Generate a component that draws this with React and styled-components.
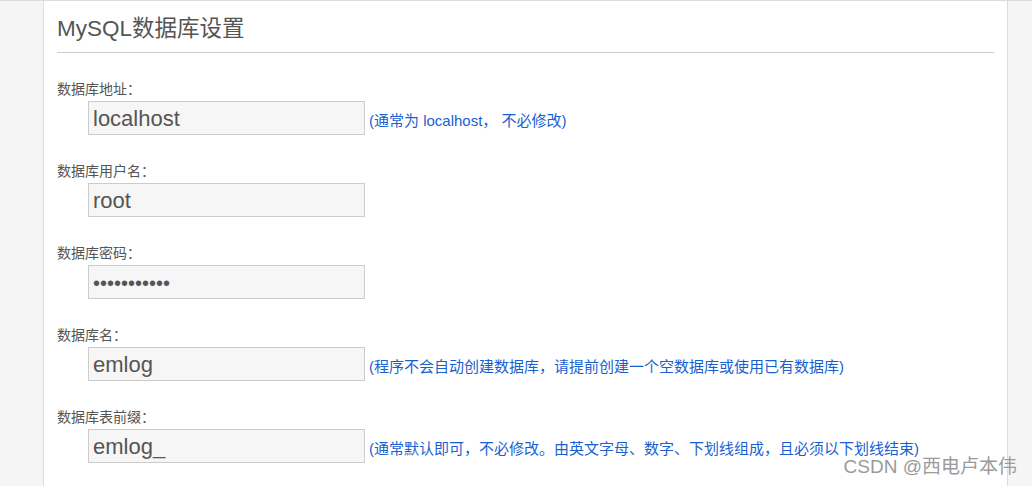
import React from "react";
import styled, { createGlobalStyle } from "styled-components";

const fields = [
  { label: "数据库地址：", value: "localhost", hint: "(通常为 localhost， 不必修改)" },
  { label: "数据库用户名：", value: "root" },
  { label: "数据库密码：", value: "•••••••••••", password: true },
  { label: "数据库名：", value: "emlog", hint: "(程序不会自动创建数据库，请提前创建一个空数据库或使用已有数据库)" },
  {
    label: "数据库表前缀：",
    value: "emlog_",
    hint: "(通常默认即可，不必修改。由英文字母、数字、下划线组成，且必须以下划线结束)",
  },
];

function App() {
  return (
    <>
      <GlobalStyle />
      <Page>
        <Panel>
          <Title>MySQL数据库设置</Title>
          {fields.map((f) => (
            <Field key={f.label}>
              <Label>{f.label}</Label>
              <InputRow>
                <Input password={f.password}>{f.value}</Input>
                {f.hint && <Hint>{f.hint}</Hint>}
              </InputRow>
            </Field>
          ))}
        </Panel>
        <Watermark>CSDN @西电卢本伟</Watermark>
      </Page>
    </>
  );
}

export default App;

const GlobalStyle = createGlobalStyle`
  html, body {
    margin: 0;
    padding: 0;
    background: #f5f5f5;
  }
  body {
    font-family: "Liberation Sans", Arial, "Noto Sans CJK SC", sans-serif;
    color: #555;
  }
`;

const Page = styled.div`
  position: relative;
  height: 486px;
  overflow: hidden;
  padding-left: 43px;
  padding-right: 24px;
  box-sizing: border-box;
  border-top: 1px solid #dcdcdc;
`;

const Panel = styled.div`
  background: #fff;
  border-left: 1px solid #ddd;
  border-right: 1px solid #ddd;
  height: 100%;
  padding: 0 13px;
  box-sizing: border-box;
`;

const Title = styled.h2`
  margin: 0;
  padding: 13px 0 8px;
  font-size: 22.5px;
  line-height: 30px;
  font-weight: normal;
  color: #555;
  border-bottom: 1px solid #ccc;
`;

const Field = styled.div`
  margin-top: 26px;
  & + & {
    margin-top: 26px;
  }
`;

const Label = styled.div`
  font-size: 14px;
  line-height: 20px;
  height: 20px;
  color: #555;
`;

const InputRow = styled.div`
  display: flex;
  align-items: baseline;
  padding-left: 31px;
  margin-top: 2px;
`;

const Input = styled.div`
  width: 277px;
  height: 34px;
  box-sizing: border-box;
  border: 1px solid #ccc;
  background: #f6f6f6;
  padding: 1px 4px 0;
  font-size: ${(p) => (p.password ? "20px" : "22px")};
  line-height: 32px;
  color: #555;
  flex-shrink: 0;
`;

const Hint = styled.span`
  margin-left: 4px;
  font-size: 15px;
  color: #1a5fd1;
  white-space: nowrap;
`;

const Watermark = styled.div`
  position: absolute;
  right: 15px;
  bottom: 8px;
  font-size: 19px;
  color: #9a9a9a;
  text-shadow: 0 0 1px #fff;
`;
